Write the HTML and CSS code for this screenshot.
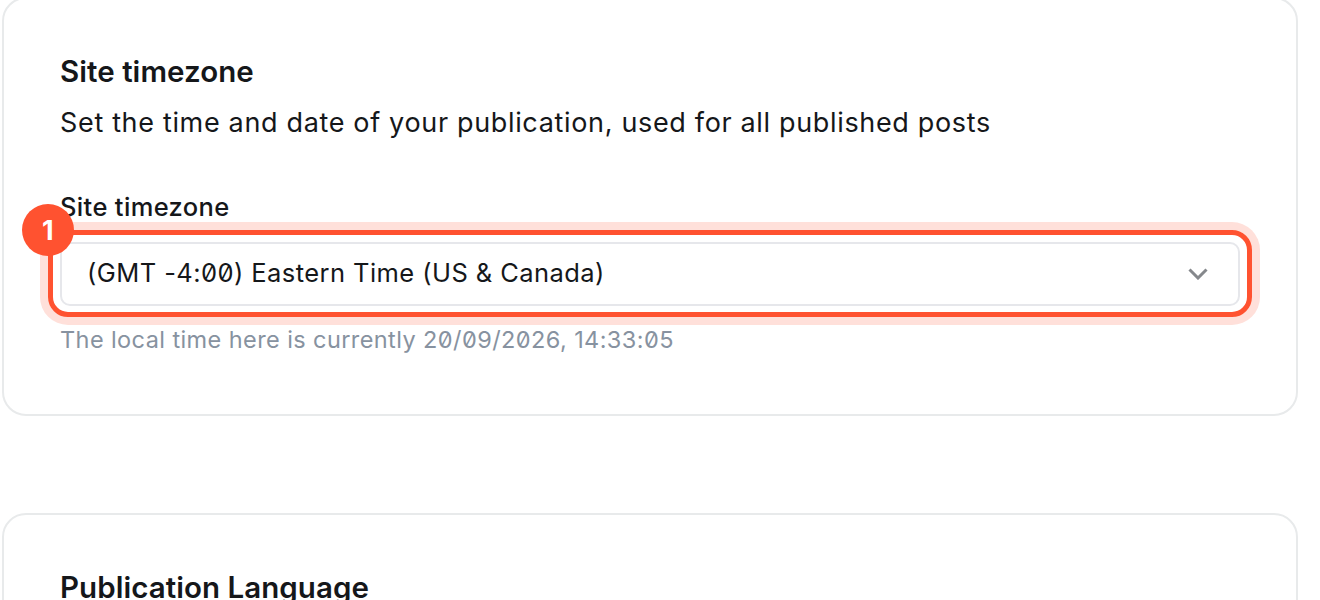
FILE: index.html
```html
<!DOCTYPE html>
<html lang="en">
<head>
<meta charset="utf-8">
<title>Site timezone</title>
<link rel="stylesheet" href="styles.css">
</head>
<body>
<main class="page">
  <section class="card">
    <h2 class="title">Site timezone</h2>
    <p class="desc">Set the time and date of your publication, used for all published posts</p>
    <div class="field">
      <label class="label">Site timezone</label>
      <div class="select">
        <span class="value">(GMT -4:00) Eastern Time (US &amp; Canada)</span>
        <svg class="chevron" width="20" height="12" viewBox="0 0 20 12" fill="none"><path d="M1.5 1.5 10 10l8.5-8.5" stroke="#85888c" stroke-width="3"/></svg>
        <div class="highlight"></div>
        <div class="badge">1</div>
      </div>
      <p class="hint">The local time here is currently 20/09/2026, 14:33:05</p>
    </div>
  </section>
  <section class="card">
    <h2 class="title">Publication Language</h2>
  </section>
</main>
</body>
</html>
```
FILE: styles.css
```css
* { box-sizing: border-box; }
html, body { margin: 0; height: 600px; overflow: hidden; background: #fff; }
body { font-family: Inter, "Liberation Sans", sans-serif; color: #15171a; font-feature-settings: "zero"; }
.page { width: 1296px; margin-left: 2px; margin-top: -3px; display: flex; flex-direction: column; gap: 97px; }
.card { border: 2px solid #e8eaeb; border-radius: 24px; padding: 53px 56px 55px; }
.title { margin: 0; font-size: 29.5px; line-height: 38px; font-weight: 600; letter-spacing: 0.05px; }
.desc { margin: 14px 0 0; font-size: 27px; line-height: 38px; letter-spacing: 0.66px; }
.field { margin-top: 48px; }
.label { display: block; font-size: 25.5px; line-height: 34px; font-weight: 450; letter-spacing: 0.35px; }
.select { position: relative; height: 64px; margin-top: 18px; border: 2px solid #e6e7eb; border-radius: 10px; padding: 0 30px 0 25px; display: flex; align-items: center; justify-content: space-between; font-size: 25.5px; letter-spacing: 0.43px; background: #fff; }
.value { padding-bottom: 3px; }
.chevron { flex: none; }
.highlight { position: absolute; left: -14px; right: -14px; top: -14px; bottom: -13px; border: 5.5px solid #ff5230; border-radius: 20px; box-shadow: 0 0 0 8px #ffe0da; pointer-events: none; }
.badge { position: absolute; left: -40px; top: -40px; width: 52px; height: 52px; border-radius: 50%; background: #ff5230; color: #fff; display: flex; align-items: center; justify-content: center; font-size: 27px; font-weight: 700; }
.hint { margin: 15px 0 0; font-size: 23.5px; line-height: 38px; letter-spacing: 0.41px; color: #8792a0; }
```
